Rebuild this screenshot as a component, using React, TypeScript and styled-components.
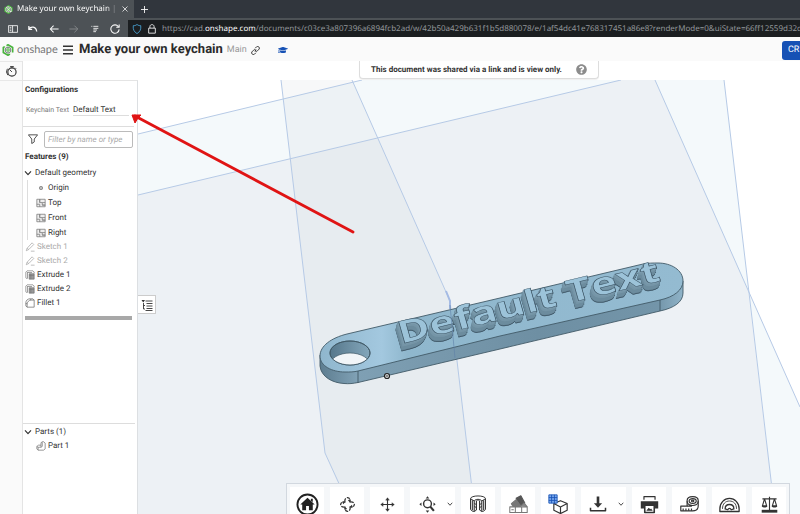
import React from "react";
import styled, { createGlobalStyle } from "styled-components";
import { FaGraduationCap, FaQuestionCircle } from "react-icons/fa";

const Global = createGlobalStyle`
  * { box-sizing: border-box; }
  body { margin: 0; font-family: Roboto, "Liberation Sans", sans-serif; color: #333; text-rendering: geometricPrecision; }
  button, input { font: inherit; color: inherit; margin: 0; padding: 0; border: 0; background: none; text-rendering: inherit; }
  ul { margin: 0; padding: 0; list-style: none; }
  h1, h2 { margin: 0; }
  svg { display: block; flex: none; }
`;

const Page = styled.div`
  position: relative;
  display: flex;
  flex-direction: column;
  height: 100vh;
  overflow: hidden;
  background: #fff;
`;

const TabStrip = styled.div`
  display: flex;
  flex: none;
  height: 18px;
  background: #31363d;
  color: #fcfcfc;
  font: 8px/16px "Noto Sans", sans-serif;
`;

const BrowserTab = styled.div`
  display: flex;
  align-items: center;
  width: 134px;
  padding: 0 6px 0 4px;
  gap: 4px;
  background: #4d5256;
`;

const TabTitle = styled.span`
  flex: 1;
  overflow: hidden;
  white-space: nowrap;
  mask-image: linear-gradient(to right, #000 88%, transparent);
`;

const IconButton = styled.button<{ $w?: number }>`
  display: flex;
  align-items: center;
  justify-content: center;
  flex: none;
  width: ${(p) => p.$w ?? 10}px;
`;

const NavBar = styled.nav`
  display: flex;
  flex: none;
  height: 19px;
  border-top: 2px solid #4d5256;
  background: #4d5256;
  color: #fcfcfc;
`;

const NavButtons = styled.div`
  display: flex;
  align-items: center;
  justify-content: space-between;
  flex: none;
  width: 128px;
  padding: 0 8px;
`;

const AddressBar = styled.div`
  display: flex;
  align-items: center;
  flex: 1;
  min-width: 0;
  overflow: hidden;
  padding-left: 4px;
  gap: 5px;
  background: #1b1e20;
`;

const Url = styled.span`
  font: 8px/15px "Noto Sans", sans-serif;
  color: #92969a;
  white-space: nowrap;
  strong { font-weight: 400; color: #fcfcfc; }
`;

const Header = styled.header`
  display: flex;
  align-items: center;
  flex: none;
  height: 24px;
  padding: 2px 0 0 2px;
  background: #fafafa;
`;

const Brand = styled.a`
  display: flex;
  align-items: center;
  gap: 3px;
  width: 61px;
  font: 11px/16px Lato, sans-serif;
  color: #777;
  text-decoration: none;
`;

const Title = styled.h1`
  margin: 0 4px 0 6px;
  font-size: 13px;
  line-height: 18px;
  font-weight: 700;
  white-space: nowrap;
  color: #2b2b2b;
`;

const Branch = styled.span`
  margin-right: 4px;
  font-size: 9px;
  line-height: 16px;
  color: #999;
`;

const LearnLink = styled.a`
  margin-left: 17px;
  color: #1651b5;
`;

const CreateButton = styled.button`
  width: 18px;
  height: 19px;
  margin-left: auto;
  padding-left: 6px;
  overflow: hidden;
  text-align: left;
  white-space: nowrap;
  border-radius: 3px 0 0 3px;
  background: #1651b5;
  color: #fff;
  font-size: 9px;
  line-height: 19px;
`;

const Workspace = styled.div`
  display: flex;
  flex: 1;
  min-height: 0;
`;

const Rail = styled.aside`
  flex: none;
  width: 23px;
  border-right: 1px solid #e4e4e4;
  background: #fafafa;
`;

const RailButton = styled(IconButton)`
  width: 22px;
  height: 20px;
  border-top: 1px solid #e8e8e8;
  border-bottom: 1px solid #e8e8e8;
`;

const Main = styled.div`
  display: flex;
  flex-direction: column;
  flex: 1;
  min-width: 0;
`;

const NoticeRow = styled.div`
  display: flex;
  justify-content: center;
  flex: none;
  height: 19px;
  padding-left: 135px;
`;

const Notice = styled.div`
  position: relative;
  z-index: 1;
  display: flex;
  align-items: center;
  justify-content: space-between;
  width: 240px;
  height: 18px;
  padding: 0 11px;
  border: 1px solid #ddd;
  border-top: 0;
  border-radius: 0 0 4px 4px;
  background: #fff;
  box-shadow: 0 1px 1px #0001;
  font-size: 8px;
  line-height: 18px;
  font-weight: 700;
  white-space: nowrap;
`;

const Split = styled.div`
  display: flex;
  flex: 1;
  min-height: 0;
`;

const Panel = styled.section`
  display: flex;
  flex-direction: column;
  flex: none;
  width: 115px;
  border-top: 1px solid #e4e4e4;
  border-right: 1px solid #dcdfe2;
  background: #fff;
  font-size: 8px;
  line-height: 14px;
  white-space: nowrap;
`;

const PanelTitle = styled.h2`
  padding-left: 2px;
  font-size: 8px;
  line-height: 16px;
  font-weight: 700;
`;

const ConfigSection = styled.div`
  flex: none;
  height: 46px;
  margin-right: 3px;
  padding-top: 1px;
  border-bottom: 1px solid #ddd;
`;

const ConfigRow = styled.div`
  display: flex;
  align-items: center;
  height: 24px;
  padding: 0 5px 0 3px;
  gap: 5px;
`;

const ConfigLabel = styled.label`
  width: 42px;
  font-size: 7px;
  color: #777;
`;

const ConfigInput = styled.input`
  flex: 1;
  min-width: 0;
  height: 12px;
  border-bottom: 1px solid #ddd;
  font-size: 8px;
`;

const FilterRow = styled.div`
  display: flex;
  align-items: center;
  height: 22px;
  padding: 2px 4px 0 5px;
  gap: 6px;
`;

const FilterInput = styled.input`
  flex: 1;
  min-width: 0;
  height: 17px;
  padding: 0 3px;
  border: 1px solid #bbb;
  border-radius: 2px;
  font-size: 8px;
  font-style: italic;
  &::placeholder { color: #aaa; opacity: 1; }
`;

const Row = styled.li<{ $tall?: boolean; $muted?: boolean; $indent?: boolean }>`
  display: flex;
  align-items: center;
  gap: 2px;
  height: ${(p) => (p.$tall ? 15 : 14)}px;
  padding-left: ${(p) => (p.$indent ? 13 : 2)}px;
  color: ${(p) => (p.$muted ? "#aaa" : "#333")};
`;

const GroupButton = styled.button`
  display: flex;
  align-items: center;
  gap: 3px;
  height: 15px;
  padding-left: 1px;
`;

const Children = styled.ul`
  margin-left: 4px;
  border-left: 1px solid #ddd;
  ${Row} { padding-left: 8px; }
`;

const Rollback = styled.div`
  height: 4px;
  margin: 6px 5px 0 2px;
  background: #a8a8a8;
`;

const FeatureSection = styled.div`
  flex: 1;
  min-height: 0;
`;

const PartSection = styled.div`
  flex: none;
  min-height: 91px;
  margin-right: 2px;
  border-top: 1px solid #ddd;
`;

const Viewport = styled.div`
  position: relative;
  flex: 1;
  min-width: 0;
  overflow: hidden;
`;

const Scene = styled.svg`
  width: 100%;
  height: 100%;
`;

const Raised = styled.g`
  filter: drop-shadow(-1px 1px 0 #7b9bad) drop-shadow(-1px 2px 0 #7595a7)
    drop-shadow(-1px 4px 0 #6c8c9e) drop-shadow(0 1px 0 #3d5565);
  font: 700 43px "Open Sans", sans-serif;
`;

const ListToggle = styled(IconButton)`
  position: absolute;
  left: 0;
  top: 215px;
  width: 18px;
  height: 19px;
  border: 1px solid #ccc;
  border-left: 0;
  background: #fff;
`;

const ViewTools = styled.div`
  position: absolute;
  left: 148px;
  bottom: 0;
  display: flex;
  gap: 6px;
  height: 31px;
  padding: 3px 3px 0;
  border: 1px solid #d2d8df;
  border-bottom: 0;
  background: #f5f7f9;
`;

const Tool = styled.div`
  display: flex;
  height: 34px;
  background: #fff;
`;

const Pointer = styled.svg`
  position: absolute;
  left: 128px;
  top: 110px;
  pointer-events: none;
`;

type IconProps = { size?: number; box?: number; sw?: number; children: React.ReactNode };
const Icon = ({ size = 10, box = 24, sw = 2, children }: IconProps) => (
  <svg width={size} height={size} viewBox={`0 0 ${box} ${box}`} fill="none" stroke="currentColor"
    strokeWidth={sw} strokeLinejoin="round" aria-hidden="true">{children}</svg>
);

const Logo = ({ size }: { size: number }) => (
  <svg width={size} height={size} viewBox="0 0 24 24" aria-hidden="true" fill="none" strokeLinejoin="round">
    <path d="M12 1.500 21.500 7v10L12 22.500 2.500 17V7z" fill="#e9f6e4" />
    <path d="M9 3.200 12 1.500 21.500 7v10M16 20.300 12 22.500 2.500 17V7l3-1.700" stroke="#48b33c" strokeWidth="3" />
    <path d="m12 6 5.500 3v6L12 18.500 6.500 15V9z" stroke="#6b7075" strokeWidth="2" />
    <circle cx="12" cy="12" r="2.500" stroke="#48b33c" strokeWidth="2" />
  </svg>
);

const Chevron = ({ size = 8 }: { size?: number }) => (
  <Icon size={size} sw={3.500}><path d="m3 7 9 10 9-10" /></Icon>
);

const PlaneIcon = () => (
  <Icon size={10} sw={1.800}><g stroke="#777"><path d="M2 3h7v8h6v6h7v4H2zM9 3h13v14h-7" fill="#eee" /><path d="M2 15h7v6M9 3v8M15 11h7" /></g></Icon>
);
const SketchIcon = () => (
  <Icon size={10} sw={1.800}><path d="m3 21 2-6L17 2l4 4L9 18zM5 15l4 3M14 22h9" /></Icon>
);
const ExtrudeIcon = () => (
  <Icon size={10} sw={1.500}><g stroke="#666"><path d="M6 20H3l-1-2V5l3-3h14l3 3v3M5 6h12M6 6v14" /><path d="M10 9h12v13H10z" fill="#999" /><path d="M10 13h12M14 9v13" stroke="#777" /></g></Icon>
);
const FilletIcon = () => (
  <Icon size={10} sw={1.700}><g stroke="#666"><path d="M2 12C2 6 6 2 12 2h7l3 3v17H5l-3-3zM5 22v-7c0-5 4-10 10-10h7M2 12l3 3M12 2l3 3" /></g></Icon>
);
const PartIcon = () => (
  <Icon size={10} sw={1.800}><g stroke="#777"><path d="M2 13l4-3h6V4l5-3 5 4v14l-4 3H5l-3-3zM12 10v5H5l-3-2M12 15l3-2V3M5 15v7" /></g></Icon>
);

const HomeIcon = () => (
  <svg width="23" height="23" viewBox="0 0 24 24" aria-hidden="true">
    <circle cx="12" cy="12" r="10.500" fill="#fff" stroke="#222" strokeWidth="2" />
    <path d="m12 5 7.500 7h-2v6H13.500v-4.500h-3V18h-4v-6h-2zM15.500 6h2v3.500l-2-1.500z" fill="#222" />
  </svg>
);
const RotateIcon = () => (
  <Icon size={15} sw={2}>
    <path d="M8 9C7 4 9 1 12 1c2 0 3 1 3.500 3M15 8c5-1 8 1 8 4 0 2-1 3-3 3.500M16 15c1 5-1 8-4 8-2 0-3-1-3.500-3M9 16c-5 1-8-1-8-4 0-2 1-3 3-3.500" strokeDasharray="7 2" />
    <path d="m12.500 5 5-1-1 5zM19 12.500l1 5-5-1zM11.500 19l-5 1 1-5zM5 11.500l-1-5 5 1z" fill="currentColor" stroke="none" />
  </Icon>
);
const PanIcon = () => (
  <Icon size={15} sw={1.800}>
    <path d="M12 2v20M2 12h20" />
    <path d="m9 5 3-4 3 4zM9 19l3 4 3-4zM5 9l-4 3 4 3zM19 9l4 3-4 3z" fill="currentColor" strokeWidth="0.500" />
  </Icon>
);
const ZoomIcon = () => (
  <Icon size={17} sw={2}>
    <circle cx="12" cy="11" r="5.500" /><path d="m16 15 5 6" strokeWidth="3" />
    <path d="m9.500 3.500 2.500-3 2.500 3zM9.500 20.500l2.500 3 2.500-3zM3.500 9l-3 2.500 3 2.500zM20.500 9l3 2.500-3 2.500z" fill="currentColor" stroke="none" />
  </Icon>
);
const SectionIcon = () => (
  <Icon size={18} sw={1.300}>
    <path d="M2 5v14c1 2 3 3 5 3l3-2V8l2-2 2 2v12l3 2c2 0 4-1 5-3V5" fill="#e4e4e4" />
    <path d="M2 5c0-5 20-5 20 0l-5 3c-1-3-9-3-10 0z" fill="#fff" />
    <path d="M7 8v14M17 8v14M4.500 7v13M19.500 7v13M7 11l3 2M7 15l3 2M17 11l-3 2M17 15l-3 2" />
  </Icon>
);
const PaletteIcon = () => (
  <Icon size={19} sw={1.300}>
    <path d="m9 4 6-3 5 9-6 4z" fill="#555" stroke="#555" /><path d="m3 11 6-5 6 8-8 4z" fill="#777" stroke="#777" />
    <path d="M15 14l4-4 4 5" fill="#888" stroke="#777" />
    <path d="M1 15h22v7H1zM8 15v7M16 15v7M3 18.500h3" fill="#fff" stroke="#777" />
  </Icon>
);
const CubeIcon = () => (
  <Icon size={20} sw={1.400}>
    <path d="m15 8 8 3.500v8L15 23.500 7 19.500v-8zM7 11.500l8 4 8-4M15 15.500v8" fill="#fff" />
    <path d="M1 1h10v10H1z" fill="#7aa8ec" stroke="#1651b5" strokeWidth="1" /><path d="M1 4.300h10M1 7.700h10M4.300 1v10M7.700 1v10" stroke="#1651b5" strokeWidth="1" />
  </Icon>
);
const DownloadIcon = () => (
  <Icon size={18} sw={2}>
    <path d="M12 2v11" strokeWidth="3.500" /><path d="M6.500 11h11L12 17z" fill="currentColor" stroke="none" /><path d="M2 17v4h20v-4" />
  </Icon>
);
const PrintIcon = () => (
  <Icon size={19} sw={2}>
    <path d="M5 6V2h14v4" strokeWidth="1.500" /><path d="M1 8h22v9h-4v-4H5v4H1z" fill="currentColor" stroke="none" />
    <path d="M6 13h12v9H6z" fill="#fff" /><path d="m8 20 3-4 2 2 1-1 2 3z" fill="currentColor" stroke="none" />
  </Icon>
);
const TapeIcon = () => (
  <Icon size={19} sw={1.500}>
    <path d="M9 14V7c0-3 3-5 7-5s7 2 7 5v7c0 4-3 6-7 6H1v-6z" fill="#fff" />
    <ellipse cx="16" cy="7.500" rx="4.500" ry="3" /><ellipse cx="16" cy="7.500" rx="1.500" ry="1" />
    <path d="M9 8c0 7 14 7 14 0M4 20v-3M7.500 20v-3M11 20v-3M14.500 20v-3M9 14h6" />
  </Icon>
);
const ProtractorIcon = () => (
  <Icon size={21} sw={1.500}>
    <path d="M1 20v-3C1 10 6 5 12 5s11 5 11 12v3z" /><path d="M7 17c0-3 2-5 5-5s5 2 5 5l-3 1c-1-2-3-2-4 0z" />
    <path d="M4 17c0-6 3.500-9 8-9s8 3 8 9" strokeWidth="1" />
  </Icon>
);
const ScaleIcon = () => (
  <Icon size={17} sw={1.600}>
    <path d="M12 1v20M2 4h20M5 4 2 14h6zM19 4l-3 10h6z" /><path d="M1 14h8c-1 3-7 3-8 0zM15 14h8c-1 3-7 3-8 0z" fill="currentColor" stroke="none" /><path d="M1 21.500h22" strokeWidth="4" />
  </Icon>
);

const tools: { name: string; icon: React.ReactNode; menu?: boolean }[] = [
  { name: "Home view", icon: <HomeIcon /> },
  { name: "Rotate", icon: <RotateIcon /> },
  { name: "Pan", icon: <PanIcon /> },
  { name: "Zoom", icon: <ZoomIcon />, menu: true },
  { name: "Section view", icon: <SectionIcon /> },
  { name: "Appearance", icon: <PaletteIcon /> },
  { name: "View cube", icon: <CubeIcon /> },
  { name: "Export", icon: <DownloadIcon />, menu: true },
  { name: "Print", icon: <PrintIcon /> },
  { name: "Measure", icon: <TapeIcon /> },
  { name: "Angle", icon: <ProtractorIcon /> },
  { name: "Mass properties", icon: <ScaleIcon /> },
];

const features = [
  { name: "Sketch 1", icon: <SketchIcon />, muted: true },
  { name: "Sketch 2", icon: <SketchIcon />, muted: true },
  { name: "Extrude 1", icon: <ExtrudeIcon /> },
  { name: "Extrude 2", icon: <ExtrudeIcon /> },
  { name: "Fillet 1", icon: <FilletIcon /> },
];

const Model = () => (
  <Scene viewBox="138 80 662 434" preserveAspectRatio="xMinYMin slice" role="img" aria-label="Keychain model">
    <defs>
      <linearGradient id="top" x1="0" x2="1">
        <stop offset="0" stopColor="#8fb6cd" /><stop offset=".17" stopColor="#a3c8df" />
        <stop offset=".24" stopColor="#8fb7cd" /><stop offset="1" stopColor="#94bbd1" />
      </linearGradient>
      <linearGradient id="side" x1="0" x2="1">
        <stop offset="0" stopColor="#5d7d90" /><stop offset=".1" stopColor="#7fa0b4" />
        <stop offset=".6" stopColor="#6e8fa3" /><stop offset=".93" stopColor="#7395a9" /><stop offset="1" stopColor="#8fb3c8" />
      </linearGradient>
      <linearGradient id="bore" x1="0" x2="1">
        <stop offset="0" stopColor="#56778b" /><stop offset="1" stopColor="#84a7bb" />
      </linearGradient>
      <clipPath id="hole"><ellipse cx="350" cy="353" rx="20" ry="12" /></clipPath>
    </defs>
    <path d="M138 134 362 80H724L775 514H138z" fill="#f4f9fb" />
    <path d="M655 80 748 290 757 360 775 514H800V407L748 290z" fill="#f4f9fb" />
    <path d="M138 195 621 80H655L748 290 775 514H138z" fill="#edf1f5" />
    <path d="M281 80H352L450 301 475 514H351L325 453z" fill="#c4ccd3" fillOpacity=".14" />
    <g fill="none" stroke="#b6cae6" strokeWidth="1">
      <path d="M138 134 362 80M138 195 621 80M281 80 325 453 353 514M352 80 450 301 475 514M655 80 748 290 800 407M724 80 775 514" />
      <path d="m446 291 4 10v8" stroke="#a5bbe4" strokeWidth="2" />
    </g>
    <g stroke="#425a68" strokeWidth=".9" strokeLinejoin="round">
      <path d="M320 355v11c1 11 13 17 24 17.500 5 .5 9 0 14-1L500 349l160-38c14-3 23-9 23-18V281z" fill="url(#side)" />
      <path d="M347 334C331 338 320 346 320 356c0 10 12 16 25 16 5 0 9 0 13-1L500 336l160-36c14-3 23-10 23-19 0-11-12-18-25-18-5 0-10 0-15 1L500 298z" fill="url(#top)" />
      <path d="M358 371v12M660 300v11" fill="none" />
      <ellipse cx="350" cy="353" rx="20" ry="12" fill="url(#bore)" />
      <ellipse cx="350" cy="365" rx="20" ry="12" fill="#f1f5f8" clipPath="url(#hole)" strokeWidth=".7" />
      <ellipse cx="350" cy="353" rx="20" ry="12" fill="none" />
    </g>
    <Raised>
      <text transform="matrix(.985 -.24 .2 .7 401 344)" fill="#9cc3d9" stroke="#3c5464" strokeWidth=".7">Default Text</text>
    </Raised>
    <path d="m450 305 5 53" stroke="#5f80a8" strokeWidth="1" opacity=".6" />
    <circle cx="387" cy="376" r="2.500" fill="#ddd" stroke="#222" strokeWidth="1.200" />
    <circle cx="387" cy="376" r=".8" fill="#222" />
  </Scene>
);

export default function App() {
  return (
    <Page>
      <Global />
      <TabStrip>
        <BrowserTab>
          <Logo size={9} />
          <TabTitle>Make your own keychain | Keychain</TabTitle>
          <IconButton $w={6} aria-label="Close tab"><Icon size={6} sw={3}><path d="m2 2 20 20M22 2 2 22" /></Icon></IconButton>
        </BrowserTab>
        <IconButton $w={21} aria-label="New tab"><Icon size={7} sw={3}><path d="M12 0v24M0 12h24" /></Icon></IconButton>
      </TabStrip>
      <NavBar>
        <NavButtons>
          <IconButton aria-label="Sidebar"><Icon><path d="M1 4h22v16H1zM11 4v16M4 8h4M4 12h4M4 16h4" /></Icon></IconButton>
          <IconButton aria-label="Undo"><Icon sw={3}><path d="M2 5v8h8M2 12c5-7 17-7 19 6" /></Icon></IconButton>
          <IconButton aria-label="Back"><Icon sw={2.500}><path d="M23 12H3M11 4l-8 8 8 8" /></Icon></IconButton>
          <IconButton aria-label="Forward" disabled><Icon sw={2}><path d="M1 12h20M13 4l8 8-8 8" stroke="#8b8f92" /></Icon></IconButton>
          <IconButton aria-label="Reader list"><Icon size={8} sw={2.500}><path d="M1 4h3M7 4h15M7 10h15M7 15h11M7 20h8" /></Icon></IconButton>
          <IconButton aria-label="Reload"><Icon size={10} sw={2.500}><path d="M20 6a10 10 0 1 0 2 7M22 1v7h-7" /></Icon></IconButton>
        </NavButtons>
        <AddressBar>
          <Icon size={10}><path d="M12 1c3 3 6 3 9 3 1 9-2 15-9 19C5 19 2 13 3 4c3 0 6 0 9-3z" stroke="#4aa8dc" /></Icon>
          <Icon size={10}><path d="M4 10h16v12H4zM7 10V6c0-6 10-6 10 0v4" /></Icon>
          <Url>https://cad.<strong>onshape.com</strong>/documents/c03ce3a807396a6894fcb2ad/w/42b50a429b631f1b5d880078/e/1af54dc41e768317451a86e8?renderMode=0&amp;uiState=66ff12559d32d03</Url>
        </AddressBar>
      </NavBar>
      <Header>
        <Brand href="#"><Logo size={12} />onshape</Brand>
        <IconButton aria-label="Menu"><Icon size={10} sw={4}><path d="M0 3h24M0 12h24M0 21h24" /></Icon></IconButton>
        <Title>Make your own keychain</Title>
        <Branch>Main</Branch>
        <IconButton aria-label="Copy link"><Icon size={9} sw={2.500}><path d="m10 14 4-4M11 6l4-4c4-3 9 2 7 6l-5 5c-2 2-5 2-6 0M13 18l-4 4c-4 3-9-2-7-6l5-5c2-2 5-2 6 0" /></Icon></IconButton>
        <LearnLink href="#" aria-label="Learning center"><FaGraduationCap size={10} /></LearnLink>
        <CreateButton>CREATE</CreateButton>
      </Header>
      <Workspace>
        <Rail>
          <RailButton aria-label="History"><Icon size={11}><circle cx="13" cy="13" r="9" strokeWidth="2.500" /><path d="M9 1h8M13 2v3M13 13 8 8M3 6 1 13l3 7M20 4l2 2" /></Icon></RailButton>
        </Rail>
        <Main>
          <NoticeRow>
            <Notice>This document was shared via a link and is view only.<FaQuestionCircle size={11} color="#8c8c8c" /></Notice>
          </NoticeRow>
          <Split>
            <Panel>
              <ConfigSection>
                <PanelTitle>Configurations</PanelTitle>
                <ConfigRow>
                  <ConfigLabel htmlFor="keychain-text">Keychain Text</ConfigLabel>
                  <ConfigInput id="keychain-text" defaultValue="Default Text" />
                </ConfigRow>
              </ConfigSection>
              <FeatureSection>
                <FilterRow>
                  <Icon size={10}><path d="M1 2h22l-8 10v7l-6 4V12z" /></Icon>
                  <FilterInput aria-label="Filter features" placeholder="Filter by name or type" />
                </FilterRow>
                <PanelTitle>Features (9)</PanelTitle>
                <GroupButton><Chevron />Default geometry</GroupButton>
                <Children>
                  <Row $tall><Icon><circle cx="12" cy="12" r="4" fill="#bbb" stroke="#888" /></Icon>Origin</Row>
                  {["Top", "Front", "Right"].map((n) => <Row $tall key={n}><PlaneIcon />{n}</Row>)}
                </Children>
                <ul>
                  {features.map((f) => <Row key={f.name} $muted={f.muted}>{f.icon}{f.name}</Row>)}
                </ul>
                <Rollback />
              </FeatureSection>
              <PartSection>
                <GroupButton><Chevron />Parts (1)</GroupButton>
                <ul><Row $indent><PartIcon />Part 1</Row></ul>
              </PartSection>
            </Panel>
            <Viewport>
              <Model />
              <ListToggle aria-label="Feature list"><Icon size={12} sw={1.800}><path d="M9 4h14M11 9h12M11 14h12M11 19h12M9 23h14M5 8v12h3M5 13h3" /><path d="M1 2h7L4.500 7z" fill="currentColor" stroke="none" /></Icon></ListToggle>
              <ViewTools role="toolbar" aria-label="View tools">
                {tools.map((t) => (
                  <Tool key={t.name}>
                    <IconButton $w={34} aria-label={t.name}>{t.icon}</IconButton>
                    {t.menu && <IconButton $w={11} aria-label={`${t.name} options`}><Chevron size={6} /></IconButton>}
                  </Tool>
                ))}
              </ViewTools>
            </Viewport>
          </Split>
        </Main>
      </Workspace>
      <Pointer width="230" height="126" viewBox="128 110 230 126" aria-hidden="true">
        <path d="M135 116 353 232" stroke="#e01414" strokeWidth="2.800" strokeLinecap="round" />
        <path d="m132 115 9 0-3 3-3 5z" fill="#e01414" stroke="#e01414" strokeLinejoin="round" />
      </Pointer>
    </Page>
  );
}
